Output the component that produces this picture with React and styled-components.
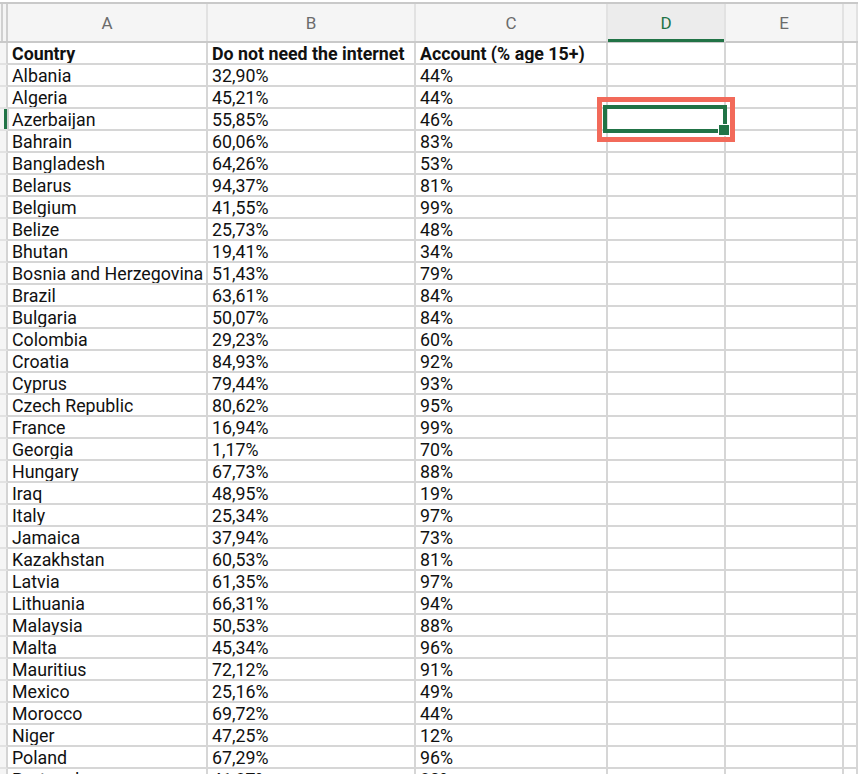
import React from "react";
import styled, { createGlobalStyle } from "styled-components";

const rows = [
    ["Country", "Do not need the internet", "Account (% age 15+)"],
    ["Albania", "32,90%", "44%"],
    ["Algeria", "45,21%", "44%"],
    ["Azerbaijan", "55,85%", "46%"],
    ["Bahrain", "60,06%", "83%"],
    ["Bangladesh", "64,26%", "53%"],
    ["Belarus", "94,37%", "81%"],
    ["Belgium", "41,55%", "99%"],
    ["Belize", "25,73%", "48%"],
    ["Bhutan", "19,41%", "34%"],
    ["Bosnia and Herzegovina", "51,43%", "79%"],
    ["Brazil", "63,61%", "84%"],
    ["Bulgaria", "50,07%", "84%"],
    ["Colombia", "29,23%", "60%"],
    ["Croatia", "84,93%", "92%"],
    ["Cyprus", "79,44%", "93%"],
    ["Czech Republic", "80,62%", "95%"],
    ["France", "16,94%", "99%"],
    ["Georgia", "1,17%", "70%"],
    ["Hungary", "67,73%", "88%"],
    ["Iraq", "48,95%", "19%"],
    ["Italy", "25,34%", "97%"],
    ["Jamaica", "37,94%", "73%"],
    ["Kazakhstan", "60,53%", "81%"],
    ["Latvia", "61,35%", "97%"],
    ["Lithuania", "66,31%", "94%"],
    ["Malaysia", "50,53%", "88%"],
    ["Malta", "45,34%", "96%"],
    ["Mauritius", "72,12%", "91%"],
    ["Mexico", "25,16%", "49%"],
    ["Morocco", "69,72%", "44%"],
    ["Niger", "47,25%", "12%"],
    ["Poland", "67,29%", "96%"],
    ["Portugal", "41,87%", "80%"],
];

const columns = ["A", "B", "C", "D", "E", ""];
const COLS = "8px 200px 208px 192px 118px 118px 1fr";

function App() {
    return (
        <>
            <Global />
            <Sheet>
                <HeadRow>
                    <Corner />
                    {columns.map((c) => (
                        <ColHead key={c || "F"} active={c === "D"}>{c}</ColHead>
                    ))}
                </HeadRow>
                <Body>
                    {rows.map((r, i) => (
                        <Row key={r[0]}>
                            <RowHead active={i === 3} />
                            <Cell bold={i === 0}>{r[0]}</Cell>
                            <Cell bold={i === 0}>{r[1]}</Cell>
                            <Cell bold={i === 0}>{r[2]}</Cell>
                            <Cell />
                            <Cell />
                            <Cell />
                        </Row>
                    ))}
                    <Selection>
                        <FillHandle />
                    </Selection>
                    <Highlight />
                </Body>
            </Sheet>
        </>
    );
}

export default App;

const Global = createGlobalStyle`
    html, body {
        margin: 0;
        padding: 0;
        background: #ffffff;
        overflow: hidden;
        height: 774px;
    }
    body {
        font-family: Roboto, "Liberation Sans", sans-serif;
    }
`
const Sheet = styled.div`
    width: 858px;
    padding-top: 2px;
    background: #ffffff;
`
const HeadRow = styled.div`
    display: grid;
    grid-template-columns: ${COLS};
    height: 41px;
    box-sizing: border-box;
    border-top: 2px solid #c9c9c9;
    border-bottom: 2px solid #c9c9c9;
    background: #f5f5f5;
`
const Corner = styled.div`
    border-left: 2px solid #d0d0d0;
    border-right: 2px solid #cfcfcf;
    margin-left: 1px;
`
const ColHead = styled.div`
    display: flex;
    align-items: center;
    justify-content: center;
    border-right: 2px solid #e2e2e2;
    font-size: 17px;
    color: ${(p) => (p.active ? "#217346" : "#6b6b6b")};
    background: ${(p) => (p.active ? "#ececec" : "transparent")};
    box-shadow: ${(p) => (p.active ? "inset 0 -3px 0 #217346" : "none")};
    margin-bottom: ${(p) => (p.active ? "-1px" : "0")};
`
const Body = styled.div`
    position: relative;
`
const Row = styled.div`
    display: grid;
    grid-template-columns: ${COLS};
    height: 22px;
`
const RowHead = styled.div`
    background: #f5f5f5;
    border-right: 2px solid #d4d4d4;
    border-bottom: 2px solid #e2e2e2;
    box-shadow: ${(p) => (p.active ? "inset -3px 0 0 #217346" : "none")};
    margin-right: ${(p) => (p.active ? "-1px" : "0")};
`
const Cell = styled.div`
    box-sizing: border-box;
    border-right: 2px solid #d6d6d6;
    border-bottom: 2px solid #d6d6d6;
    padding: 1px 0 0 4px;
    font-size: 17.8px;
    line-height: 20px;
    font-weight: ${(p) => (p.bold ? 700 : 400)};
    color: #111111;
    white-space: nowrap;
    overflow: hidden;
`
const Selection = styled.div`
    position: absolute;
    left: 603px;
    top: 62px;
    width: 124px;
    height: 28px;
    box-sizing: border-box;
    border: 4px solid #217346;
`
const FillHandle = styled.div`
    position: absolute;
    right: -6px;
    bottom: -6px;
    width: 10px;
    height: 10px;
    background: #217346;
    box-shadow: 0 0 0 1px #ffffff;
`
const Highlight = styled.div`
    position: absolute;
    left: 597px;
    top: 54px;
    width: 138px;
    height: 45px;
    box-sizing: border-box;
    border: 5px solid #f26a5a;
`
